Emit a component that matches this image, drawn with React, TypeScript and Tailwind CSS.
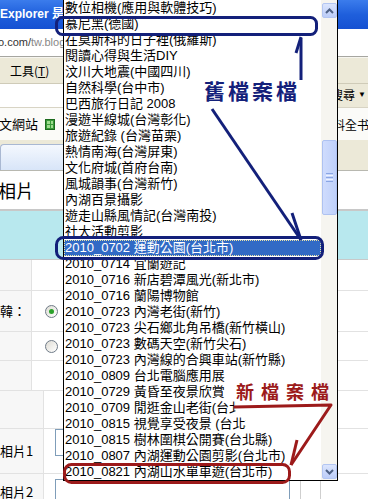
import React from "react";

const items: string[] = [
  "數位相機(應用與軟體技巧)",
  "慕尼黑(德國)",
  "在莫斯科的日子裡(俄羅斯)",
  "閱讀心得與生活DIY",
  "汶川大地震(中國四川)",
  "自然科學(台中市)",
  "巴西旅行日記 2008",
  "漫遊半線城(台灣彰化)",
  "旅遊紀錄 (台灣苗栗)",
  "熱情南海(台灣屏東)",
  "文化府城(首府台南)",
  "風城韻事(台灣新竹)",
  "內湖百景攝影",
  "遊走山縣風情記(台灣南投)",
  "社大活動剪影",
  "2010_0702 運動公園(台北市)",
  "2010_0714 宜蘭遊記",
  "2010_0716 新店碧潭風光(新北市)",
  "2010_0716 蘭陽博物館",
  "2010_0723 內灣老街(新竹)",
  "2010_0723 尖石鄉北角吊橋(新竹橫山)",
  "2010_0723 數碼天空(新竹尖石)",
  "2010_0723 內灣線的合興車站(新竹縣)",
  "2010_0809 台北電腦應用展",
  "2010_0729 黃昏至夜景欣賞",
  "2010_0709 閒逛金山老街(台北縣)",
  "2010_0815 視覺享受夜景 (台北樹林)",
  "2010_0815 樹林圍棋公開賽(台北縣)",
  "2010_0807 內湖運動公園剪影(台北市)",
  "2010_0821 內湖山水單車遊(台北市)",
];

function Radio({ checked }: { checked?: boolean }) {
  return (
    <span className="w-[13px] h-[13px] rounded-full border border-[#6f7b88] bg-gradient-to-br from-[#dedcd4] to-white flex items-center justify-center shrink-0">
      {checked && <span className="w-[5px] h-[5px] rounded-full bg-[#2aa12a]" />}
    </span>
  );
}

function ScrollButton({ up }: { up?: boolean }) {
  return (
    <div className="w-[15px] h-[15px] mx-auto rounded-[2px] border border-[#b3c6f2] bg-gradient-to-b from-[#dbe5fd] to-[#bccdf8] flex items-center justify-center">
      <svg width="9" height="6" viewBox="0 0 9 6">
        <path
          d={up ? "M1 5 L4.5 1.5 L8 5" : "M1 1 L4.5 4.5 L8 1"}
          fill="none"
          stroke="#4d6185"
          strokeWidth="2"
        />
      </svg>
    </div>
  );
}

export default function App() {
  return (
    <div className="relative w-[368px] h-[499px] overflow-hidden bg-white font-['Liberation_Sans','Noto_Sans_CJK_TC',sans-serif] text-black">
      {/* ===== IE window background ===== */}
      <div className="h-[29px] bg-gradient-to-b from-[#3b7cec] via-[#1f5fdc] to-[#1551d2] flex items-center text-white font-bold text-[12px] pb-[2px] whitespace-nowrap">
        <span>Explorer 是</span>
      </div>
      <div className="h-[28px] bg-white border-b border-[#a6a6a0] flex items-center text-[11px] whitespace-nowrap">
        <span className="ml-[-2px] text-[#333]">o.com/</span>
        <span className="text-[#888]">tw.blog</span>
      </div>
      <div className="h-[26px] bg-[#ece9d8] border-t border-[#f6f5ef] flex items-center text-[12px] whitespace-nowrap">
        <span className="ml-[10px] font-['Noto_Sans_CJK_TC',sans-serif]">
          工具(<span className="underline">T</span>)
        </span>
      </div>
      <div className="h-[24px] flex border-t border-[#cfcbb8]">
        <div className="w-[338px] bg-white" />
        <div className="flex-1 bg-[#ece9d8] flex items-start pt-[2px] text-[12px] whitespace-nowrap">
          <span className="ml-[-7px] font-['Noto_Sans_CJK_TC',sans-serif]">搜尋</span>
          <span className="ml-[3px] text-[8px] mt-[3px]">▼</span>
        </div>
      </div>
      <div className="h-[33px] flex border-t border-[#d8d4c4] bg-[#fbfbf8]">
        <div className="w-[338px] flex items-center whitespace-nowrap">
          <span className="ml-[-1px] text-[13px] font-['Noto_Sans_CJK_TC',sans-serif]">文網站</span>
          <span className="ml-[7px] w-[10px] h-[11px] bg-[#3a9a3a] border border-[#1d6b1d] grid grid-cols-2 gap-[1px] p-[1px]">
            <span className="bg-[#9fdc8f]" />
            <span className="bg-[#9fdc8f]" />
            <span className="bg-[#9fdc8f]" />
            <span className="bg-[#9fdc8f]" />
          </span>
        </div>
        <div className="flex-1 min-w-0 flex items-center pt-[2px] text-[12px] whitespace-nowrap">
          <span className="ml-[-5px] shrink-0 font-['Noto_Sans_CJK_TC',sans-serif]">料全书</span>
        </div>
      </div>
      <div className="h-[30px] bg-[#ece9d8] flex items-end">
        <div className="w-[110px] h-[26px] rounded-tl-[4px] border-t border-l border-[#a9b8d2] bg-gradient-to-b from-[#f4f8fe] to-[#d8e5f8]" />
      </div>
      <div className="h-[41px] bg-white border-t border-[#b8b8b0] border-b-2 border-b-[#c8c8c8] flex items-center whitespace-nowrap">
        <span className="ml-[-2px] text-[18px] font-['Noto_Sans_CJK_TC',sans-serif]">相片</span>
      </div>
      <div className="h-[48px] bg-[#b8e8ee]" />

      {/* table */}
      <div className="text-[13px] font-['Noto_Sans_CJK_TC',sans-serif] whitespace-nowrap">
        <div className="h-[32px] flex border-t border-[#c9c9c9] border-b border-b-[#e2e2e2]">
          <div className="w-[32px] border-r border-[#e2e2e2] bg-[#f7f7f7]" />
        </div>
        <div className="h-[41px] flex items-stretch border-b border-[#e2e2e2]">
          <div className="w-[32px] border-r border-[#e2e2e2] bg-[#f7f7f7] flex items-center">
            <span>韓：</span>
          </div>
          <div className="flex items-center ml-[13px]">
            <Radio checked />
          </div>
        </div>
        <div className="h-[29px] flex items-stretch border-b border-[#e2e2e2]">
          <div className="w-[32px] border-r border-[#e2e2e2] bg-[#f7f7f7]" />
          <div className="flex items-center ml-[13px]">
            <Radio />
          </div>
        </div>
        <div className="h-[30px] flex border-b border-[#e2e2e2]">
          <div className="w-[32px] border-r border-[#e2e2e2] bg-[#f7f7f7]" />
        </div>
        <div className="h-[38px] flex border-b border-[#e2e2e2]">
          <div className="w-[44px] border-r border-[#e2e2e2] bg-[#f7f7f7]" />
        </div>
        <div className="h-[45px] flex border-b border-[#e2e2e2]">
          <div className="w-[44px] border-r border-[#e2e2e2] bg-[#f7f7f7] flex items-center">
            <span>相片1</span>
          </div>
          <div className="ml-[11px] w-[240px] h-[27px] border border-[#7f9db9] bg-white" />
        </div>
        <div className="h-[30px] flex">
          <div className="w-[44px] border-r border-[#e2e2e2] bg-[#f7f7f7] flex items-start pt-[8px]">
            <span>相片2</span>
          </div>
          <div className="ml-[11px] mt-[5px] w-[235px] h-[25px] border border-[#7f9db9] bg-white" />
          <div className="ml-[10px] w-[21px] border-l border-r border-[#cfcfcf]" />
        </div>
      </div>

      {/* ===== dropdown list (overlay) ===== */}
      <div className="absolute left-[63px] top-[-1px] w-[275px] h-[482px] border border-black bg-white flex">
        <div className="flex-1 flex flex-col text-[13px]">
          {items.map((t, i) =>
            i === 15 ? (
              <div
                key={i}
                className="h-[16px] leading-[16px] pl-[1px] bg-[#316ac5] text-white border border-dotted border-[#e9e2a8] whitespace-nowrap overflow-hidden"
              >
                <span className="ml-[-1px] relative top-[-1px]">{t}</span>
              </div>
            ) : (
              <div key={i} className="h-[16px] leading-[16px] pl-[1px] whitespace-nowrap overflow-hidden">
                {t}
              </div>
            )
          )}
        </div>
        <div className="w-[16px] bg-[#f6f5f0] flex flex-col">
          <div className="mt-[3px]">
            <ScrollButton up />
          </div>
          <div className="mt-[122px] mx-auto w-[15px] h-[75px] rounded-[2px] border border-[#aec2f1] bg-gradient-to-r from-[#cfdcfd] to-[#bfd0fa] flex flex-col items-center justify-center gap-[1px]">
            <span className="w-[7px] h-[1px] bg-[#8aa6e4]" />
            <span className="w-[7px] h-[1px] bg-[#eef3ff]" />
            <span className="w-[7px] h-[1px] bg-[#8aa6e4]" />
            <span className="w-[7px] h-[1px] bg-[#eef3ff]" />
            <span className="w-[7px] h-[1px] bg-[#8aa6e4]" />
          </div>
          <div className="flex-1" />
          <div className="mb-[1px]">
            <ScrollButton />
          </div>
        </div>
      </div>

      {/* ===== annotations (overlay) ===== */}
      <svg className="absolute inset-0 pointer-events-none" width="368" height="499" viewBox="0 0 368 499">
        <polygon points="236,379 320,379 320,431 246,431 246,415 236,415" fill="#ffffff" />
        {/* navy: old file */}
        <rect x="56.5" y="17.5" width="260" height="17" rx="6" fill="none" stroke="#13207a" strokeWidth="3" />
        <rect x="56.5" y="237.5" width="266" height="21" rx="7" fill="none" stroke="#13207a" strokeWidth="3" />
        <line x1="301" y1="80" x2="301" y2="38" stroke="#13207a" strokeWidth="3" />
        <line x1="296" y1="53" x2="301" y2="37" stroke="#13207a" strokeWidth="3" />
        <line x1="212" y1="109" x2="301" y2="240" stroke="#13207a" strokeWidth="3" />
        <line x1="292" y1="213" x2="301" y2="240" stroke="#13207a" strokeWidth="3" />
        {/* red: new file */}
        <rect x="64.5" y="464.5" width="225" height="18" rx="7" fill="none" stroke="#9c1a1a" strokeWidth="3" />
        <polyline points="234,407 331,405 291,465" fill="none" stroke="#9c1a1a" strokeWidth="3" strokeLinejoin="round" />
        <line x1="297" y1="440" x2="291" y2="465" stroke="#9c1a1a" strokeWidth="3" />
      </svg>
      <div className="absolute left-[204px] top-[79px] text-[21px] leading-[23px] tracking-[3px] font-bold text-[#13207a] font-['Noto_Sans_CJK_TC',sans-serif] whitespace-nowrap">
        舊檔案檔
      </div>
      <div className="absolute left-[236px] top-[381px] text-[18px] leading-[20px] tracking-[7px] font-bold text-[#9c1a1a] font-['Noto_Sans_CJK_TC',sans-serif] whitespace-nowrap">
        新檔案檔
      </div>
    </div>
  );
}
